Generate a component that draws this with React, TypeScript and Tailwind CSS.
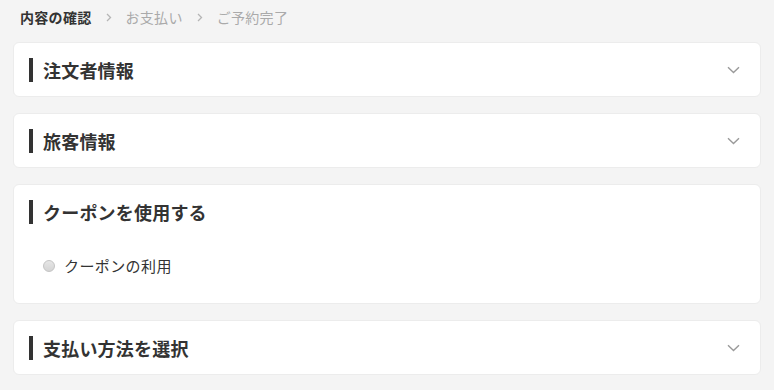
// Reservation step: order confirmation sections
const FONT = { fontFamily: '"Noto Sans CJK JP", "Noto Sans", sans-serif' };

function Chevron() {
  return (
    <svg width="13" height="8" viewBox="0 0 13 8" className="shrink-0">
      <path d="M1 1.2 L6.5 6.5 L12 1.2" fill="none" stroke="#9a9a9a" strokeWidth="1.4" />
    </svg>
  );
}

function Crumb() {
  return (
    <svg width="6" height="9" viewBox="0 0 6 9" className="mx-[14px]">
      <path d="M1 1 L4.5 4.5 L1 8" fill="none" stroke="#b5b5b5" strokeWidth="1.3" />
    </svg>
  );
}

function SectionTitle({ label }: { label: string }) {
  return (
    <div className="flex items-center">
      <span className="w-[4px] h-[24px] bg-[#333] mr-[10px]" />
      <h2 className="text-[18px] leading-[24px] font-bold text-[#333] tracking-[0.2px]">{label}</h2>
    </div>
  );
}

function Collapsed({ label }: { label: string }) {
  return (
    <div className="bg-white rounded-[6px] border border-[#ececec] h-[55px] pl-[15px] pr-[20px] flex items-center justify-between">
      <SectionTitle label={label} />
      <Chevron />
    </div>
  );
}

export default function App() {
  return (
    <div style={FONT} className="w-[774px] h-[390px] bg-[#f4f4f4] px-[13px] overflow-hidden">
      {/* Steps */}
      <div className="flex items-center h-[34px] pl-[7px] mb-[8px] text-[14px] tracking-[0.3px]">
        <span className="font-bold text-[#333]">内容の確認</span>
        <Crumb />
        <span className="text-[#aaa]">お支払い</span>
        <Crumb />
        <span className="text-[#aaa]">ご予約完了</span>
      </div>

      <div className="flex flex-col gap-[16px]">
        <Collapsed label="注文者情報" />
        <Collapsed label="旅客情報" />

        <div className="bg-white rounded-[6px] border border-[#ececec] h-[120px] pl-[15px] pr-[20px] pt-[15px]">
          <SectionTitle label="クーポンを使用する" />
          <label className="flex items-center mt-[31px] ml-[14px] text-[15px] text-[#333] tracking-[0.4px]">
            <span className="w-[12px] h-[12px] rounded-full border border-[#c4c4c4] bg-gradient-to-b from-[#e6e6e6] to-[#d4d4d4] mr-[9px]" />
            クーポンの利用
          </label>
        </div>

        <Collapsed label="支払い方法を選択" />
      </div>
    </div>
  );
}
